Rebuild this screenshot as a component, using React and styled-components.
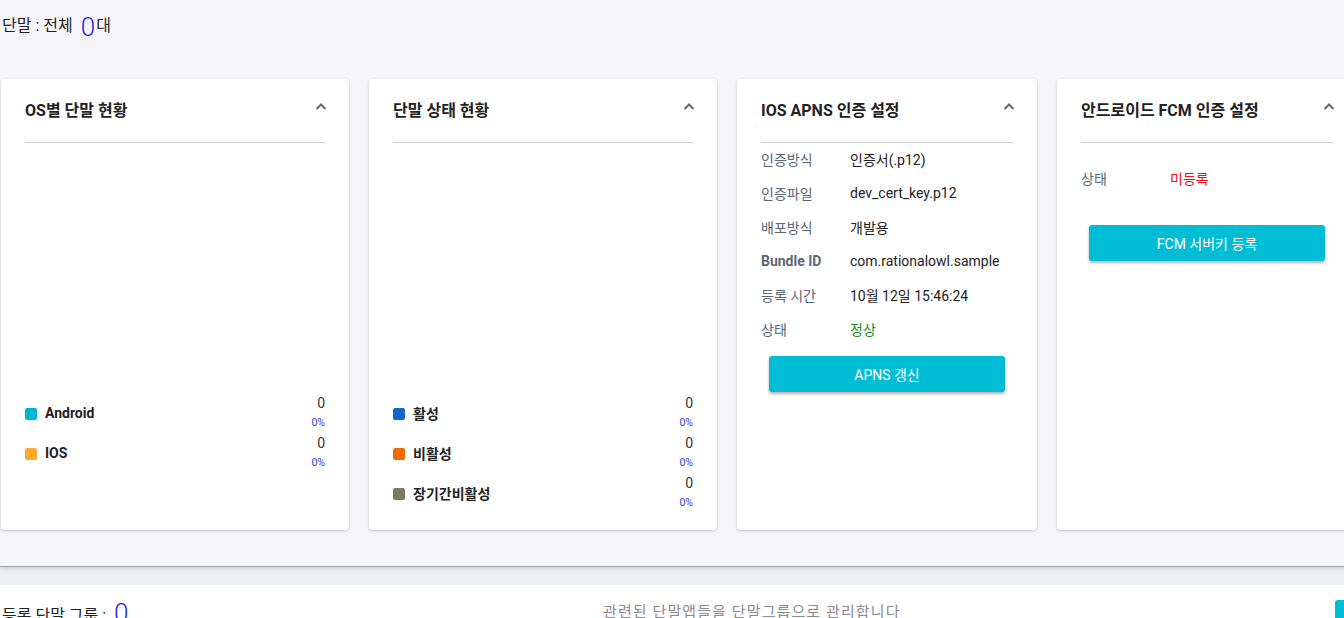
import React from "react";
import styled, { createGlobalStyle } from "styled-components";

const GlobalStyle = createGlobalStyle`
  html, body {
    margin: 0;
    padding: 0;
    overflow: hidden;
    background: #f5f5fa;
  }
  body {
    font-family: Roboto, "Noto Sans CJK KR", "Noto Sans", sans-serif;
    color: #222;
  }
`;

const Page = styled.div`
  width: 1440px;
  background: #f5f5fa;
`;

const TopArea = styled.div`
  padding: 0 0 36px 1px;
  border-bottom: 1px solid #a2a2a6;
  box-shadow: 0 2px 3px rgba(0, 0, 0, 0.12);
  position: relative;
  z-index: 1;
`;

const Summary = styled.div`
  height: 79px;
  display: flex;
  align-items: flex-start;
  padding-top: 15px;
  box-sizing: border-box;
  font-size: 16px;
  line-height: 22px;
  padding-left: 1px;
`;

const BigCount = styled.span`
  color: #1f1fe6;
  font-size: 26px;
  font-weight: 300;
  line-height: 22px;
  margin: 0 1px 0 8px;
  position: relative;
  top: 1px;
`;

const CardRow = styled.div`
  display: flex;
  gap: 20px;
  align-items: stretch;
`;

const Card = styled.section`
  flex: none;
  width: ${(p) => p.$w}px;
  box-sizing: border-box;
  background: #fff;
  border-radius: 4px;
  box-shadow: 0 1px 3px rgba(0, 0, 0, 0.22);
  padding: 0 24px 17px;
  display: flex;
  flex-direction: column;
`;

const CardHeader = styled.div`
  height: 64px;
  display: flex;
  align-items: center;
  justify-content: space-between;
  border-bottom: 1px solid #cfcfcf;
  box-sizing: border-box;
  padding-bottom: 3px;
`;

const CardTitle = styled.h3`
  margin: 0;
  font-size: 16px;
  font-weight: 700;
  color: #222;
`;

const Chevron = styled.svg`
  width: 14px;
  height: 14px;
  margin-right: -3px;
  margin-top: -6px;
`;

const ChartArea = styled.div`
  height: 250px;
`;

const LegendRow = styled.div`
  height: 40px;
  display: flex;
  align-items: center;
`;

const Swatch = styled.span`
  width: 12px;
  height: 12px;
  border-radius: 2px;
  background: ${(p) => p.$c};
  margin-right: 8px;
  flex: none;
  position: relative;
  top: 1px;
`;

const LegendLabel = styled.span`
  font-size: 14px;
  font-weight: 700;
  color: #222;
  flex: 1;
`;

const LegendValue = styled.div`
  display: flex;
  flex-direction: column;
  align-items: flex-end;
  margin-top: -2px;
`;

const Count = styled.span`
  font-size: 14px;
  line-height: 16px;
  color: #333;
`;

const Percent = styled.span`
  font-size: 10.5px;
  line-height: 14px;
  color: #2b3ae8;
  margin-top: 5px;
`;

const InfoList = styled.div`
  padding-top: ${(p) => p.$top || 0}px;
`;

const InfoRow = styled.div`
  height: 34px;
  display: flex;
  align-items: center;
  font-size: 14px;
  margin-top: -1px;
  margin-bottom: 1px;
`;

const InfoLabel = styled.span`
  width: 89px;
  flex: none;
  color: #5a6875;
  font-weight: ${(p) => (p.$bold ? 700 : 400)};
`;

const InfoValue = styled.span`
  color: ${(p) => p.$c || "#222"};
`;

const ActionButton = styled.button`
  display: block;
  width: 236px;
  height: 36px;
  margin: ${(p) => p.$mt}px 8px 0;
  border: none;
  border-radius: 3px;
  background: #00bcd4;
  color: #fff;
  font-family: Roboto, "Noto Sans CJK KR", sans-serif;
  font-size: 14px;
  box-shadow: 0 2px 3px rgba(0, 0, 0, 0.3);
  cursor: pointer;
`;

const Band = styled.div`
  height: 18px;
  background: #eff0f5;
`;

const GroupPanel = styled.div`
  background: #fff;
  display: flex;
  align-items: flex-start;
  padding: 16px 9px 20px 2px;
  height: 80px;
  box-sizing: border-box;
`;

const GroupTitle = styled.div`
  width: 601px;
  flex: none;
  font-size: 16px;
  line-height: 22px;
`;

const GroupDesc = styled.div`
  font-size: 15px;
  line-height: 22px;
  color: #8a8a8a;
  letter-spacing: 1.1px;
`;

const GroupButton = styled.button`
  margin-left: auto;
  width: 96px;
  height: 36px;
  border: none;
  border-radius: 3px;
  background: #00bcd4;
  color: #fff;
  margin-top: -1px;
`;

const ChevronUp = () => (
  <Chevron viewBox="0 0 14 14">
    <path d="M2.5 10 L7 5.5 L11.5 10" fill="none" stroke="#666" strokeWidth="2" />
  </Chevron>
);

const Header = ({ title }) => (
  <CardHeader>
    <CardTitle>{title}</CardTitle>
    <ChevronUp />
  </CardHeader>
);

const Legend = ({ color, label }) => (
  <LegendRow>
    <Swatch $c={color} />
    <LegendLabel>{label}</LegendLabel>
    <LegendValue>
      <Count>0</Count>
      <Percent>0%</Percent>
    </LegendValue>
  </LegendRow>
);

const apns = [
  ["인증방식", "인증서(.p12)"],
  ["인증파일", "dev_cert_key.p12"],
  ["배포방식", "개발용"],
  ["Bundle ID", "com.rationalowl.sample", true],
  ["등록 시간", "10월 12일 15:46:24"],
  ["상태", "정상", false, "#1a8f1a"],
];

export default function App() {
  return (
    <Page>
      <GlobalStyle />
      <TopArea>
        <Summary>
          단말 : 전체<BigCount>0</BigCount>대
        </Summary>
        <CardRow>
          <Card $w={348}>
            <Header title="OS별 단말 현황" />
            <ChartArea />
            <Legend color="#00b5cc" label="Android" />
            <Legend color="#ffa92e" label="IOS" />
          </Card>
          <Card $w={348}>
            <Header title="단말 상태 현황" />
            <ChartArea />
            <Legend color="#1565c8" label="활성" />
            <Legend color="#f06c00" label="비활성" />
            <Legend color="#7a7a68" label="장기간비활성" />
          </Card>
          <Card $w={300}>
            <Header title="IOS APNS 인증 설정" />
            <InfoList>
              {apns.map(([l, v, b, c]) => (
                <InfoRow key={l}>
                  <InfoLabel $bold={b}>{l}</InfoLabel>
                  <InfoValue $c={c}>{v}</InfoValue>
                </InfoRow>
              ))}
            </InfoList>
            <ActionButton $mt={9}>APNS 갱신</ActionButton>
          </Card>
          <Card $w={300}>
            <Header title="안드로이드 FCM 인증 설정" />
            <InfoList $top={19}>
              <InfoRow>
                <InfoLabel>상태</InfoLabel>
                <InfoValue $c="#f01010">미등록</InfoValue>
              </InfoRow>
            </InfoList>
            <ActionButton $mt={29}>FCM 서버키 등록</ActionButton>
          </Card>
        </CardRow>
      </TopArea>
      <Band />
      <GroupPanel>
        <GroupTitle>
          등록 단말 그룹 :<BigCount>0</BigCount>
        </GroupTitle>
        <GroupDesc>관련된 단말앱들을 단말그룹으로 관리합니다</GroupDesc>
        <GroupButton>추가</GroupButton>
      </GroupPanel>
    </Page>
  );
}
